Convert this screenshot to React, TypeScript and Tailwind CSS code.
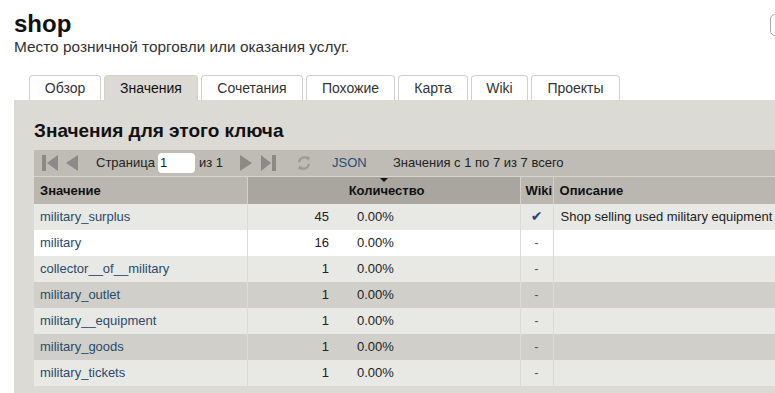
import React from "react";

const rows = [
  { v: "military_surplus", c: 45, wiki: true, d: "Shop selling used military equipment" },
  { v: "military", c: 16 },
  { v: "collector__of__military", c: 1 },
  { v: "military_outlet", c: 1 },
  { v: "military__equipment", c: 1 },
  { v: "military_goods", c: 1 },
  { v: "military_tickets", c: 1 },
] as { v: string; c: number; wiki?: boolean; d?: string }[];

const rowBg = [
  "bg-[#e8e8e4]",
  "bg-white",
  "bg-[#e8e8e4]",
  "bg-[#d1cfc9]",
  "bg-[#e8e8e4]",
  "bg-[#d1cfc9]",
  "bg-[#e8e8e4]",
];

const tabs = [
  { t: "Обзор", w: "w-[72px]" },
  { t: "Значения", w: "w-[94px]" },
  { t: "Сочетания", w: "w-[102px]" },
  { t: "Похожие", w: "w-[89px]" },
  { t: "Карта", w: "w-[70px]" },
  { t: "Wiki", w: "w-[57px]" },
  { t: "Проекты", w: "w-[89px]" },
];

function First() {
  return (
    <svg width="16" height="16" viewBox="0 0 16 16">
      <rect x="0" y="0" width="4" height="16" fill="#8b8a86" />
      <polygon points="16,0 16,16 5,8" fill="#8b8a86" />
    </svg>
  );
}
function Prev() {
  return (
    <svg width="12" height="16" viewBox="0 0 12 16">
      <polygon points="12,0 12,16 0,8" fill="#8b8a86" />
    </svg>
  );
}
function Next() {
  return (
    <svg width="12" height="16" viewBox="0 0 12 16">
      <polygon points="0,0 0,16 12,8" fill="#8b8a86" />
    </svg>
  );
}
function Last() {
  return (
    <svg width="15" height="16" viewBox="0 0 15 16">
      <polygon points="0,0 0,16 10,8" fill="#8b8a86" />
      <rect x="11" y="0" width="4" height="16" fill="#8b8a86" />
    </svg>
  );
}
function Refresh() {
  return (
    <svg width="14" height="16" viewBox="0 0 14 16">
      <path d="M2.2 7.2 A5 5 0 0 1 10.5 3.6" stroke="#9c9b97" strokeWidth="2.2" fill="none" />
      <polygon points="9,1 13,2.2 11.2,6.2" fill="#9c9b97" />
      <path d="M11.8 8.8 A5 5 0 0 1 3.5 12.4" stroke="#9c9b97" strokeWidth="2.2" fill="none" />
      <polygon points="5,15 1,13.8 2.8,9.8" fill="#9c9b97" />
    </svg>
  );
}

export default function App() {
  return (
    <div className="relative w-[775px] h-[393px] overflow-hidden bg-white font-['Liberation_Sans',Arial,sans-serif] text-[#222]">
      <div className="absolute left-[770px] top-[14px] w-[20px] h-[22px] border border-[#a9a9a9] rounded-[5px]" />
      <h1 className="pl-[14px] pt-[10px] text-[24px] leading-[28px] font-bold text-[#111]">shop</h1>
      <p className="pl-[14px] text-[15.4px] leading-[18px] text-[#333]">
        Место розничной торговли или оказания услуг.
      </p>
      <div className="flex gap-[3px] pl-[29px] mt-[19px]">
        {tabs.map((t, i) => (
          <div
            key={t.t}
            className={
              i === 1
                ? "h-[25px] text-center border border-b-0 border-[#d4d2cc] rounded-t-[4px] bg-[#dcdad4] text-[14px] leading-[24px] text-[#111] " + t.w
                : "h-[25px] text-center border border-b-0 border-[#d0d0d0] rounded-t-[4px] bg-white text-[14px] leading-[24px] text-[#333] " + t.w
            }
          >
            {t.t}
          </div>
        ))}
      </div>
      <div className="ml-[14px] w-[800px] h-[300px] bg-[#dcdad4] pt-[20px] pl-[20px]">
        <h2 className="text-[19px] leading-[22px] font-bold text-[#111]">Значения для этого ключа</h2>
        <div className="mt-[8px] w-[760px] h-[26px] bg-[#bebcb5] flex items-center text-[13px] text-[#222]">
          <div className="ml-[8px] flex"><First /></div>
          <div className="ml-[8px] flex"><Prev /></div>
          <span className="ml-[18px] w-[62px]">Страница</span>
          <div className="w-[37px] h-[20px] bg-white rounded-[4px] pl-[2px] leading-[20px]">1</div>
          <span className="ml-[4px] w-[39px]">из 1</span>
          <div className="ml-[2px] flex"><Next /></div>
          <div className="ml-[9px] flex"><Last /></div>
          <div className="ml-[21px] flex"><Refresh /></div>
          <span className="ml-[21px] w-[61px] text-[#2a4c78]">JSON</span>
          <span>Значения с 1 по 7 из 7 всего</span>
        </div>
        <table className="w-[760px] border-collapse text-[13px] table-fixed">
          <colgroup>
            <col className="w-[213px]" />
            <col className="w-[93px]" />
            <col className="w-[180px]" />
            <col className="w-[33px]" />
            <col />
          </colgroup>
          <thead>
            <tr className="h-[27px] border-t border-[#d6d4ce]">
              <th className="bg-[#b9b7b0] text-left font-bold pl-[6px] text-[#111]">Значение</th>
              <th
                colSpan={2}
                className="relative bg-[#a8a69f] text-center font-bold text-[#111] border-l border-[#d2d0ca]"
              >
                <span
                  className="absolute left-1/2 top-[1px] -translate-x-1/2 w-0 h-0 border-l-[4px] border-r-[4px] border-t-[4px] border-l-transparent border-r-transparent border-t-[#111]"
                />
                <span className="relative left-[3px]">Количество</span>
              </th>
              <th className="bg-[#b9b7b0] text-left pl-[5px] font-bold text-[#111] border-l border-[#d2d0ca]">Wiki</th>
              <th className="bg-[#b9b7b0] text-left pl-[6px] font-bold text-[#111] border-l border-[#d2d0ca]">Описание</th>
            </tr>
          </thead>
          <tbody>
            {rows.map((r, i) => (
              <tr key={r.v} className={"h-[26px] " + rowBg[i]}>
                <td className="pl-[6px] text-[#2a4a6e]">{r.v}</td>
                <td className="text-right pr-[11px] border-l border-[#dadad6]">{r.c}</td>
                <td className="pl-[17px]">0.00%</td>
                <td className="text-center border-l border-[#dadad6]">
                  {r.wiki ? (
                    <span className="text-[#1f4a82] text-[14px] font-['DejaVu_Sans',sans-serif]">✔</span>
                  ) : (
                    <span className="text-[#555]">-</span>
                  )}
                </td>
                <td className="pl-[7px] border-l border-[#dadad6] whitespace-nowrap">{r.d ?? ""}</td>
              </tr>
            ))}
          </tbody>
        </table>
      </div>
    </div>
  );
}
